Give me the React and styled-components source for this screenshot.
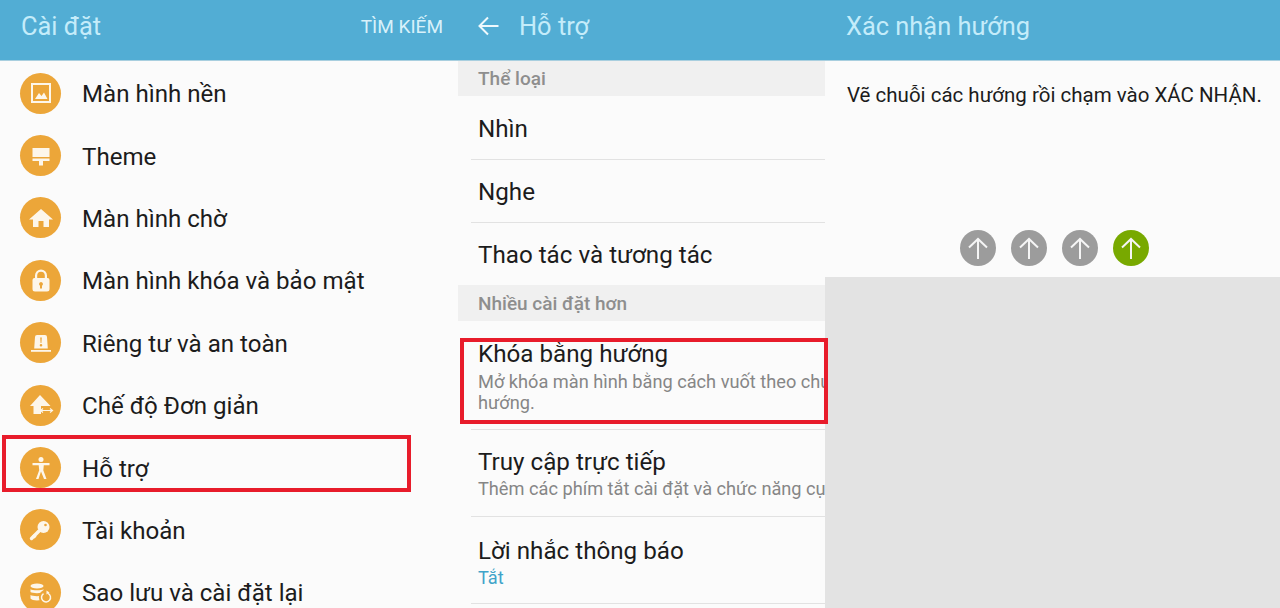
import styled, { createGlobalStyle } from "styled-components";

const GlobalStyle = createGlobalStyle`
  html, body {
    margin: 0;
    padding: 0;
    background: #fbfbfb;
  }
  body {
    font-family: Roboto, "Noto Sans", sans-serif;
    color: #1c1c1c;
  }
`;

const Screen = styled.div`
  position: relative;
  display: grid;
  grid-template-columns: 458px 367px 455px;
  width: 1280px;
  height: 608px;
  overflow: hidden;
`;

const Panel = styled.section`
  position: relative;
  display: flex;
  flex-direction: column;
  height: 608px;
  overflow: hidden;
  background: #fbfbfb;
`;

const Header = styled.header`
  display: flex;
  align-items: center;
  flex: 0 0 61px;
  box-sizing: border-box;
  padding: 0 15px 8px 21px;
  background: #52add4;
  border-bottom: 1px solid #a9cfdf;
`;

const HeaderTitle = styled.h1`
  flex: 1;
  margin: 0;
  font-size: 25.4px;
  font-weight: 400;
  color: #c4ecfa;
`;

const HeaderAction = styled.span`
  font-size: 19px;
  color: #d8f1fa;
`;

const BackButton = styled.span`
  display: flex;
  margin: 0 20px 0 -1px;
`;

const SettingList = styled.div`
  display: flex;
  flex-direction: column;
  padding-top: 1px;
`;

const SettingRow = styled.div`
  display: flex;
  align-items: center;
  flex: 0 0 62.4px;
  gap: 21px;
  padding-left: 20px;
  font-size: 24.1px;
`;

const SettingLabel = styled.span`
  padding-top: 2px;
`;

const IconCircle = styled.span`
  display: flex;
  align-items: center;
  justify-content: center;
  width: 41px;
  height: 41px;
  border-radius: 50%;
  background: #eca639;
`;

const SectionLabel = styled.div`
  display: flex;
  align-items: center;
  flex: 0 0 ${(p) => p.$height}px;
  padding-left: 20px;
  font-size: 19px;
  font-weight: 500;
  color: #8e8e8e;
  background: #f0f0f0;
`;

const MenuRow = styled.div`
  display: flex;
  flex-direction: column;
  justify-content: ${(p) => (p.$top ? "flex-start" : "center")};
  flex: 0 0 ${(p) => p.$height}px;
  box-sizing: border-box;
  margin-left: 13px;
  padding: ${(p) => p.$top || 0}px 0 0 7px;
  white-space: nowrap;
  border-bottom: ${(p) => (p.$noLine ? "none" : "1px solid #e2e2e2")};
`;

const MenuTitle = styled.div`
  padding-top: ${(p) => p.$nudge || 0}px;
  font-size: 24.2px;
  line-height: 30px;
`;

const MenuSub = styled.div`
  margin-top: ${(p) => p.$gap || 0}px;
  font-size: 18.2px;
  line-height: 21px;
  color: ${(p) => p.$color || "#868686"};
`;

const Highlight = styled.div`
  position: absolute;
  left: ${(p) => p.$left}px;
  top: ${(p) => p.$top}px;
  width: ${(p) => p.$width}px;
  height: ${(p) => p.$height}px;
  box-sizing: border-box;
  border: 4px solid #e81c2b;
  z-index: 2;
`;

const PatternArea = styled.div`
  display: flex;
  flex-direction: column;
  flex: 0 0 216px;
  box-sizing: border-box;
  padding: 21px 0 11px;
`;

const Prompt = styled.p`
  flex: 1;
  margin: 0;
  padding-left: 22px;
  font-size: 20.5px;
  line-height: 26px;
  white-space: nowrap;
`;

const Arrows = styled.div`
  display: flex;
  justify-content: center;
  gap: 15px;
  padding-left: 4px;
`;

const ArrowDot = styled.span`
  display: flex;
  align-items: center;
  justify-content: center;
  width: 36px;
  height: 36px;
  border-radius: 50%;
  background: ${(p) => (p.$active ? "#78a900" : "#9c9c9c")};
`;

const KeyPad = styled.div`
  flex: 1;
  background: #e3e3e3;
`;

const ICON_INK = "#fdf6ea";
const ICON_BG = "#eca639";

const Glyph = ({ children }) => (
  <svg width="26" height="26" viewBox="0 0 26 26" fill={ICON_INK}>
    {children}
  </svg>
);

const WallpaperIcon = () => (
  <Glyph>
    <path fillRule="evenodd" d="M3 3h20v20H3zM5 5v16h16V5z" />
    <path d="M7 19l4-6 2.500 3 2.500-3.500 3.500 6.500z" />
  </Glyph>
);
const ThemeIcon = () => (
  <Glyph>
    <path d="M4.500 5h17v9h-17zM4.500 15.500h17v2.500H15v4.500h-4V18H4.500z" />
  </Glyph>
);
const HomeIcon = () => (
  <Glyph>
    <path d="M13 4L25 14.500h-4V22h-5.500v-6h-5v6H5v-7.500H1z" />
  </Glyph>
);
const LockIcon = () => (
  <Glyph>
    <path
      fillRule="evenodd"
      d="M7 11V8.500a6 6 0 0 1 12 0V11h.5a2 2 0 0 1 2 2v9a2.500 2.500 0 0 1-2.500 2.500H7A2.500 2.500 0 0 1 4.500 22v-9a2 2 0 0 1 2-2zM9.200 11h7.600V8.500a3.800 3.800 0 0 0-7.600 0zM13 15a2 2 0 0 0-1 3.700V21.500h2v-2.800A2 2 0 0 0 13 15z"
    />
  </Glyph>
);
const PrivacyIcon = () => (
  <Glyph>
    <path
      fillRule="evenodd"
      d="M7 7a2 2 0 0 1 2-2h8a2 2 0 0 1 2 2l.8 11.500H6.200zM12.200 7.500l.4 5.500h.8l.4-5.500zM13 14a1.300 1.300 0 1 0 0 2.600 1.300 1.300 0 0 0 0-2.600z"
    />
    <path d="M3 20h20v1.800H3z" />
  </Glyph>
);
const EasyModeIcon = () => (
  <Glyph>
    <path d="M12 3L22.500 14H13v8H5.500v-8H2z" />
    <path
      d="M12.500 18.500h12M15 16.500l-2.500 2 2.500 2M22 16.500l2.500 2-2.500 2"
      fill="none"
      stroke={ICON_INK}
      strokeWidth="1.200"
    />
  </Glyph>
);
const AccessibilityIcon = () => (
  <Glyph>
    <circle cx="13" cy="4.500" r="2.500" />
    <path d="M4.500 8h17v2.200h-5.700l-.5 5 3.200 8.800h-2.500L13 16.500 10.500 24H8l3.200-8.800-.5-5H4.500z" />
  </Glyph>
);
const KeyIcon = () => (
  <Glyph>
    <path
      d="M11 14L3.500 21.500"
      fill="none"
      stroke={ICON_INK}
      strokeWidth="3.400"
      strokeLinecap="round"
    />
    <path d="M6 17l2.500 2.500-2 2-2.500-2.500z" />
    <circle cx="15.500" cy="10" r="6" />
    <circle cx="17.500" cy="8" r="1.300" fill={ICON_BG} />
  </Glyph>
);
const BackupIcon = () => (
  <Glyph>
    <ellipse cx="9" cy="7" rx="6.500" ry="2.500" />
    <path d="M2.500 10.200c1.500 1.500 11.500 1.500 13 0v2.800c-1.500 1.500-11.500 1.500-13 0z" />
    <path d="M2.500 16c1.500 1.500 11.500 1.500 13 0v3.500c-1.500 2.500-11.500 2.500-13 0z" />
    <circle cx="18" cy="18" r="7.200" fill={ICON_BG} />
    <path
      d="M15.500 14.700a4.500 4.500 0 1 0 4.500-.3"
      fill="none"
      stroke={ICON_INK}
      strokeWidth="1.500"
    />
    <path d="M18.500 11.500v4l3-2z" />
  </Glyph>
);

const SETTINGS = [
  ["Màn hình nền", WallpaperIcon],
  ["Theme", ThemeIcon],
  ["Màn hình chờ", HomeIcon],
  ["Màn hình khóa và bảo mật", LockIcon],
  ["Riêng tư và an toàn", PrivacyIcon],
  ["Chế độ Đơn giản", EasyModeIcon],
  ["Hỗ trợ", AccessibilityIcon],
  ["Tài khoản", KeyIcon],
  ["Sao lưu và cài đặt lại", BackupIcon],
];

const BackArrow = () => (
  <svg width="21" height="20" viewBox="0 0 21 20" fill="none" stroke="#eef9fd" strokeWidth="2">
    <path d="M20.500 10H2M10 1.500L1.500 10l8.500 8.500" />
  </svg>
);

const UpArrow = () => (
  <svg width="20" height="22" viewBox="0 0 20 22" fill="none" stroke="#f5f5f5" strokeWidth="2">
    <path d="M10 22V2M1 10.500L10 2l9 8.500" />
  </svg>
);

const App = () => {
  return (
    <>
      <GlobalStyle />
      <Screen>
        <Panel>
          <Header>
            <HeaderTitle>Cài đặt</HeaderTitle>
            <HeaderAction>TÌM KIẾM</HeaderAction>
          </Header>
          <SettingList>
            {SETTINGS.map(([label, Icon]) => (
              <SettingRow key={label}>
                <IconCircle>
                  <Icon />
                </IconCircle>
                <SettingLabel>{label}</SettingLabel>
              </SettingRow>
            ))}
          </SettingList>
          <Highlight $left={2} $top={435} $width={409} $height={57} />
        </Panel>

        <Panel>
          <Header>
            <BackButton>
              <BackArrow />
            </BackButton>
            <HeaderTitle>Hỗ trợ</HeaderTitle>
          </Header>
          <SectionLabel $height={35}>Thể loại</SectionLabel>
          <MenuRow $height={64}>
            <MenuTitle $nudge={2}>Nhìn</MenuTitle>
          </MenuRow>
          <MenuRow $height={63}>
            <MenuTitle $nudge={2}>Nghe</MenuTitle>
          </MenuRow>
          <MenuRow $height={62} $noLine>
            <MenuTitle $nudge={2}>Thao tác và tương tác</MenuTitle>
          </MenuRow>
          <SectionLabel $height={36}>Nhiều cài đặt hơn</SectionLabel>
          <MenuRow $height={109} $top={18}>
            <MenuTitle>Khóa bằng hướng</MenuTitle>
            <MenuSub $gap={2}>Mở khóa màn hình bằng cách vuốt theo chuỗi các</MenuSub>
            <MenuSub>hướng.</MenuSub>
          </MenuRow>
          <MenuRow $height={87}>
            <MenuTitle>Truy cập trực tiếp</MenuTitle>
            <MenuSub $gap={1}>Thêm các phím tắt cài đặt và chức năng cụ thể</MenuSub>
          </MenuRow>
          <MenuRow $height={87}>
            <MenuTitle $nudge={3}>Lời nhắc thông báo</MenuTitle>
            <MenuSub $gap={1} $color="#3fa3c9">Tắt</MenuSub>
          </MenuRow>
        </Panel>

        <Panel>
          <Header>
            <HeaderTitle>Xác nhận hướng</HeaderTitle>
          </Header>
          <PatternArea>
            <Prompt>Vẽ chuỗi các hướng rồi chạm vào XÁC NHẬN.</Prompt>
            <Arrows>
              <ArrowDot><UpArrow /></ArrowDot>
              <ArrowDot><UpArrow /></ArrowDot>
              <ArrowDot><UpArrow /></ArrowDot>
              <ArrowDot $active><UpArrow /></ArrowDot>
            </Arrows>
          </PatternArea>
          <KeyPad />
        </Panel>
        <Highlight $left={460} $top={338} $width={368} $height={86} />
      </Screen>
    </>
  );
};

export default App;
